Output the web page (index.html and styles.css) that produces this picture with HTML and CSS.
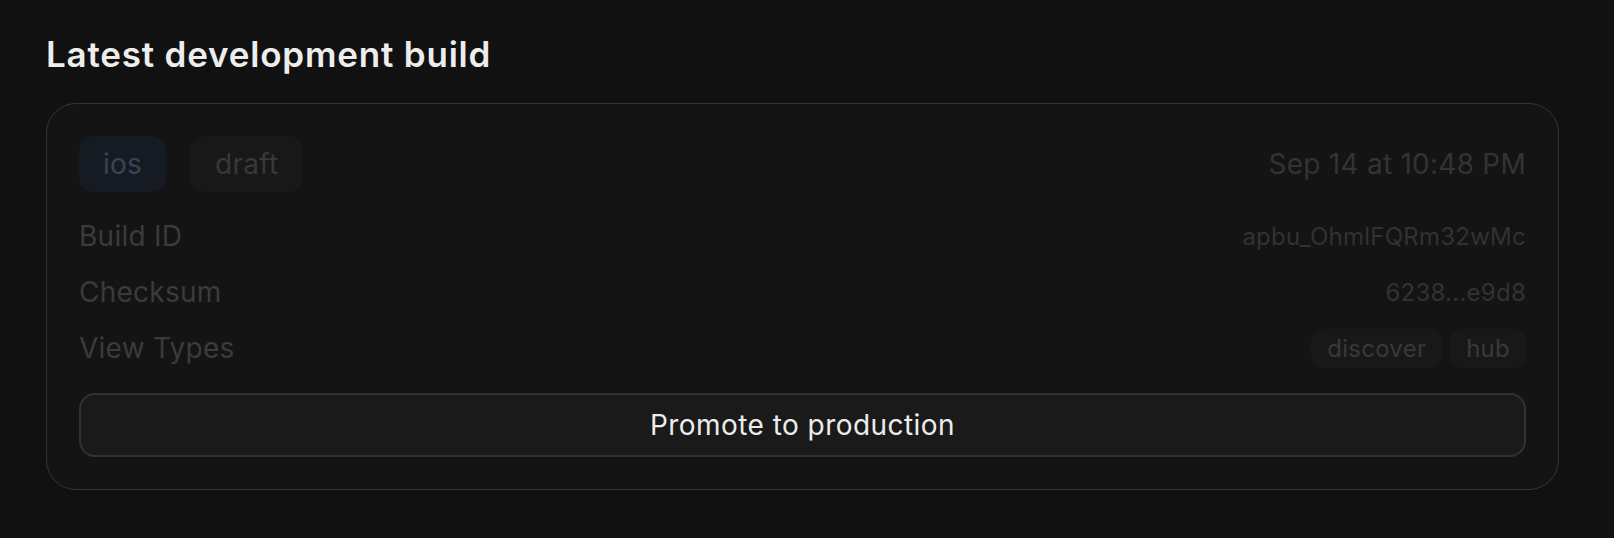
FILE: index.html
```html
<!DOCTYPE html>
<html lang="en">
<head>
<meta charset="utf-8">
<title>Latest development build</title>
<link rel="stylesheet" href="styles.css">
</head>
<body>
<main class="page">
  <h1 class="title">Latest development build</h1>
  <section class="card">
    <div class="card-head">
      <div class="badges">
        <span class="badge badge-platform">ios</span>
        <span class="badge badge-status">draft</span>
      </div>
      <span class="date">Sep 14 at 10:48 PM</span>
    </div>
    <div class="rows">
      <div class="row">
        <span class="label">Build ID</span>
        <span class="value">apbu_OhmlFQRm32wMc</span>
      </div>
      <div class="row">
        <span class="label">Checksum</span>
        <span class="value">6238...e9d8</span>
      </div>
      <div class="row">
        <span class="label">View Types</span>
        <div class="tags">
          <span class="tag">discover</span>
          <span class="tag">hub</span>
        </div>
      </div>
    </div>
    <button class="promote" type="button">Promote to production</button>
  </section>
</main>
</body>
</html>
```

FILE: styles.css
```css
* { box-sizing: border-box; }

html, body {
  margin: 0;
  background: #111111;
}

body {
  font-family: Inter, "Noto Sans", "Liberation Sans", sans-serif;
  color: #ededed;
  letter-spacing: 0.25px;
}

.page {
  padding: 34px 55px 0 46px;
}

.title {
  margin: 0 0 28px 0;
  font-size: 35px;
  line-height: 41px;
  font-weight: 600;
  color: #ededed;
  letter-spacing: 0.8px;
}

.card {
  background: #141414;
  border: 1px solid #363636;
  border-radius: 30px;
  padding: 32px;
  display: flex;
  flex-direction: column;
  gap: 24px;
}

.card-head {
  display: flex;
  align-items: center;
  justify-content: space-between;
  height: 56px;
}

.badges {
  display: flex;
  gap: 24px;
}

.badge {
  display: inline-flex;
  align-items: center;
  height: 56px;
  padding: 0 24px;
  border-radius: 15px;
  font-size: 28px;
}

.badge-platform {
  background: #151a23;
  color: #3a4354;
}

.badge-status {
  background: #181818;
  color: #383838;
  padding: 0 25px;
}

.date {
  font-size: 28px;
  color: #333333;
}

.rows {
  display: flex;
  flex-direction: column;
  gap: 16px;
}

.row {
  display: flex;
  align-items: center;
  justify-content: space-between;
  height: 40px;
}

.label {
  font-size: 28px;
  line-height: 40px;
  color: #3b3b3b;
}

.value {
  font-size: 24px;
  color: #323232;
}

.tags {
  display: flex;
  gap: 8px;
}

.tag {
  display: inline-flex;
  align-items: center;
  height: 39px;
  padding: 0 16px;
  border-radius: 12px;
  background: #181818;
  font-size: 24px;
  color: #393939;
}

.promote {
  height: 64px;
  width: 100%;
  margin-top: 1px;
  border: 2px solid #323232;
  border-radius: 16px;
  background: #1a1a1a;
  color: #ececec;
  font-family: inherit;
  font-size: 28px;
  font-weight: 400;
  letter-spacing: 0.45px;
}
```
